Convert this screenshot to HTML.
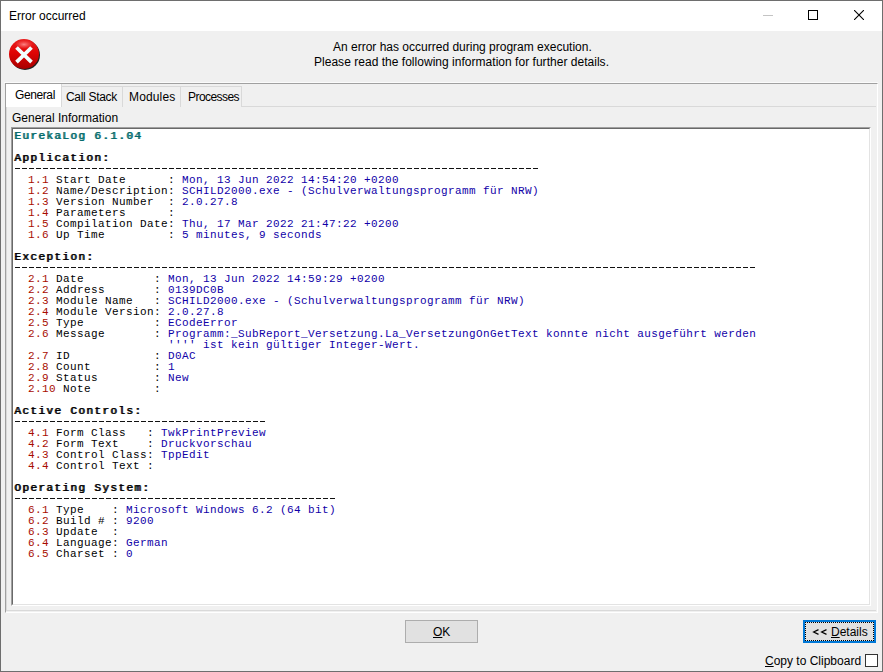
<!DOCTYPE html>
<html><head><meta charset="utf-8">
<style>
*{margin:0;padding:0;box-sizing:border-box}
html,body{width:883px;height:672px;overflow:hidden;background:#f0f0f0}
body{position:relative;font-family:"Liberation Sans",sans-serif;font-size:12px;color:#000}
.a{position:absolute}
.win{left:0;top:0;width:883px;height:672px;border:1px solid #6e6e6e;background:#f0f0f0}
.title{left:1px;top:1px;width:881px;height:30px;background:#fff}
.t{position:absolute;white-space:pre;line-height:14px}
.memo{left:11px;top:127px;width:859px;height:478px;background:#fff;border-top:2px solid #6d6d6d;border-left:2px solid #6d6d6d;border-right:1px solid #e3e3e3;border-bottom:1px solid #e3e3e3}
.m{position:absolute;left:14px;white-space:pre;font-family:"Liberation Mono",monospace;font-size:11px;line-height:11px;letter-spacing:0.4px;color:#000;}
.b{font-weight:normal;letter-spacing:1.4px;text-shadow:1px 0 0 currentColor}
.r{color:#a80c00}
.v{color:#1000a8}
.g{color:#006a6a}
.dl{left:14px;height:1px;background:repeating-linear-gradient(90deg,transparent 0 1px,#111 1px 6px,transparent 6px 7px)}
</style></head><body>
<div class="a win"></div>
<div class="a title"></div>
<div class="t" style="left:9px;top:9px">Error occurred</div>
<!-- window buttons -->
<div class="a" style="left:763px;top:15px;width:10px;height:1px;background:#c4c4c4"></div>
<div class="a" style="left:808px;top:10px;width:10px;height:10px;border:1px solid #000"></div>
<svg class="a" style="left:854px;top:10px" width="10" height="10" viewBox="0 0 10 10"><path d="M0 0L10 10M10 0L0 10" stroke="#000" stroke-width="1.1"/></svg>

<!-- icon -->
<svg class="a" style="left:7px;top:37px" width="36" height="36" viewBox="0 0 36 36">
<defs>
<linearGradient id="lg" x1="0" y1="0" x2="0" y2="1">
<stop offset="0" stop-color="#e82020"/><stop offset="0.45" stop-color="#e00404"/><stop offset="1" stop-color="#a80000"/>
</linearGradient>
<radialGradient id="hl" cx="0.5" cy="0.5" r="0.5">
<stop offset="0" stop-color="#ff9a9a" stop-opacity="0.85"/><stop offset="1" stop-color="#ff6060" stop-opacity="0"/>
</radialGradient>
</defs>
<circle cx="18" cy="18" r="15" fill="#0a0a0a" opacity="0.9"/>
<circle cx="17" cy="17" r="15" fill="url(#lg)"/>
<ellipse cx="17" cy="7.5" rx="9" ry="4.5" fill="url(#hl)"/>
<path d="M9.5 10.5L24.5 25.1M24.5 10.5L9.5 25.1" stroke="#f2ffff" stroke-width="3.8"/>
</svg>

<div class="t" style="left:333px;top:40px">An error has occurred during program execution.</div>
<div class="t" style="left:314px;top:55px;letter-spacing:0.026px">Please read the following information for further details.</div>

<!-- panel & tabs -->
<div class="a" style="left:4px;top:82px;width:874px;height:1px;background:#fbfbfb"></div>
<div class="a" style="left:5px;top:83px;width:873px;height:530px;border-top:1px solid #a0a0a0;border-left:1px solid #a0a0a0;border-right:1px solid #fff;border-bottom:1px solid #fff"></div>
<!-- tab sheet -->
<div class="a" style="left:6px;top:106px;width:870px;height:505px;border:1px solid #d9d9d9;border-right:none"></div>
<!-- inactive tabs -->
<div class="a" style="left:61px;top:86px;width:62px;height:21px;border:1px solid #d9d9d9;border-bottom:none;background:#f0f0f0"></div>
<div class="a" style="left:122px;top:86px;width:59px;height:21px;border:1px solid #d9d9d9;border-bottom:none;background:#f0f0f0"></div>
<div class="a" style="left:180px;top:86px;width:62px;height:21px;border:1px solid #d9d9d9;border-bottom:none;background:#f0f0f0"></div>
<!-- active tab -->
<div class="a" style="left:6px;top:84px;width:56px;height:23px;background:#fff;border-right:1px solid #d9d9d9"></div>
<div class="t" style="left:15px;top:88px;letter-spacing:-0.4px">General</div>
<div class="t" style="left:66px;top:90px;letter-spacing:-0.3px">Call Stack</div>
<div class="t" style="left:129px;top:90px;letter-spacing:0.15px">Modules</div>
<div class="t" style="left:188px;top:90px;letter-spacing:-0.55px">Processes</div>
<div class="t" style="left:12px;top:111px">General Information</div>

<!-- memo -->
<div class="a" style="left:11px;top:127px;width:860px;height:479px;background:#fff;border-top:1px solid #a0a0a0;border-left:1px solid #a0a0a0;border-right:1px solid #fff;border-bottom:1px solid #fff"></div>
<div class="a" style="left:12px;top:128px;width:858px;height:477px;border-top:1px solid #696969;border-left:1px solid #696969;border-right:1px solid #e3e3e3;border-bottom:1px solid #e3e3e3"></div>
<pre class="m" style="top:131px"><span class="b g">EurekaLog 6.1.04</span>

<span class="b">Application:</span>

  <span class="r">1.1</span> Start Date      : <span class="v">Mon, 13 Jun 2022 14:54:20 +0200</span>
  <span class="r">1.2</span> Name/Description: <span class="v">SCHILD2000.exe - (Schulverwaltungsprogramm für NRW)</span>
  <span class="r">1.3</span> Version Number  : <span class="v">2.0.27.8</span>
  <span class="r">1.4</span> Parameters      : <span class="v"></span>
  <span class="r">1.5</span> Compilation Date: <span class="v">Thu, 17 Mar 2022 21:47:22 +0200</span>
  <span class="r">1.6</span> Up Time         : <span class="v">5 minutes, 9 seconds</span>

<span class="b">Exception:</span>

  <span class="r">2.1</span> Date          : <span class="v">Mon, 13 Jun 2022 14:59:29 +0200</span>
  <span class="r">2.2</span> Address       : <span class="v">0139DC0B</span>
  <span class="r">2.3</span> Module Name   : <span class="v">SCHILD2000.exe - (Schulverwaltungsprogramm für NRW)</span>
  <span class="r">2.4</span> Module Version: <span class="v">2.0.27.8</span>
  <span class="r">2.5</span> Type          : <span class="v">ECodeError</span>
  <span class="r">2.6</span> Message       : <span class="v">Programm:_SubReport_Versetzung.La_VersetzungOnGetText konnte nicht ausgeführt werden</span>
                      <span class="v">'''' ist kein gültiger Integer-Wert.</span>
  <span class="r">2.7</span> ID            : <span class="v">D0AC</span>
  <span class="r">2.8</span> Count         : <span class="v">1</span>
  <span class="r">2.9</span> Status        : <span class="v">New</span>
  <span class="r">2.10</span> Note         : <span class="v"></span>

<span class="b">Active Controls:</span>

  <span class="r">4.1</span> Form Class   : <span class="v">TwkPrintPreview</span>
  <span class="r">4.2</span> Form Text    : <span class="v">Druckvorschau</span>
  <span class="r">4.3</span> Control Class: <span class="v">TppEdit</span>
  <span class="r">4.4</span> Control Text : <span class="v"></span>

<span class="b">Operating System:</span>

  <span class="r">6.1</span> Type    : <span class="v">Microsoft Windows 6.2 (64 bit)</span>
  <span class="r">6.2</span> Build # : <span class="v">9200</span>
  <span class="r">6.3</span> Update  : <span class="v"></span>
  <span class="r">6.4</span> Language: <span class="v">German</span>
  <span class="r">6.5</span> Charset : <span class="v">0</span></pre>

<div class="a dl" style="top:168px;width:525px"></div>
<div class="a dl" style="top:267px;width:742px"></div>
<div class="a dl" style="top:421px;width:252px"></div>
<div class="a dl" style="top:498px;width:322px"></div>
<!-- buttons -->
<div class="a" style="left:405px;top:620px;width:73px;height:23px;background:#e1e1e1;border:1px solid #adadad"></div>
<div class="t" style="left:433px;top:625px"><u>O</u>K</div>
<div class="a" style="left:803px;top:620px;width:73px;height:23px;background:#e1e1e1;border:2px solid #0078d7"></div>
<div class="a" style="left:805px;top:622px;width:69px;height:19px;border:1px dotted #000"></div>
<svg class="a" style="left:812px;top:628px" width="16" height="8" viewBox="0 0 16 8"><path d="M6.5 1.6L1.6 4L6.5 6.4M14.5 1.6L9.6 4L14.5 6.4" fill="none" stroke="#000" stroke-width="1.2"/></svg>
<div class="t" style="left:831px;top:625px"><u>D</u>etails</div>
<div class="t" style="left:765px;top:654px"><u>C</u>opy to Clipboard</div>
<div class="a" style="left:865px;top:654px;width:13px;height:13px;background:#fff;border:1px solid #333"></div>

</body></html>
